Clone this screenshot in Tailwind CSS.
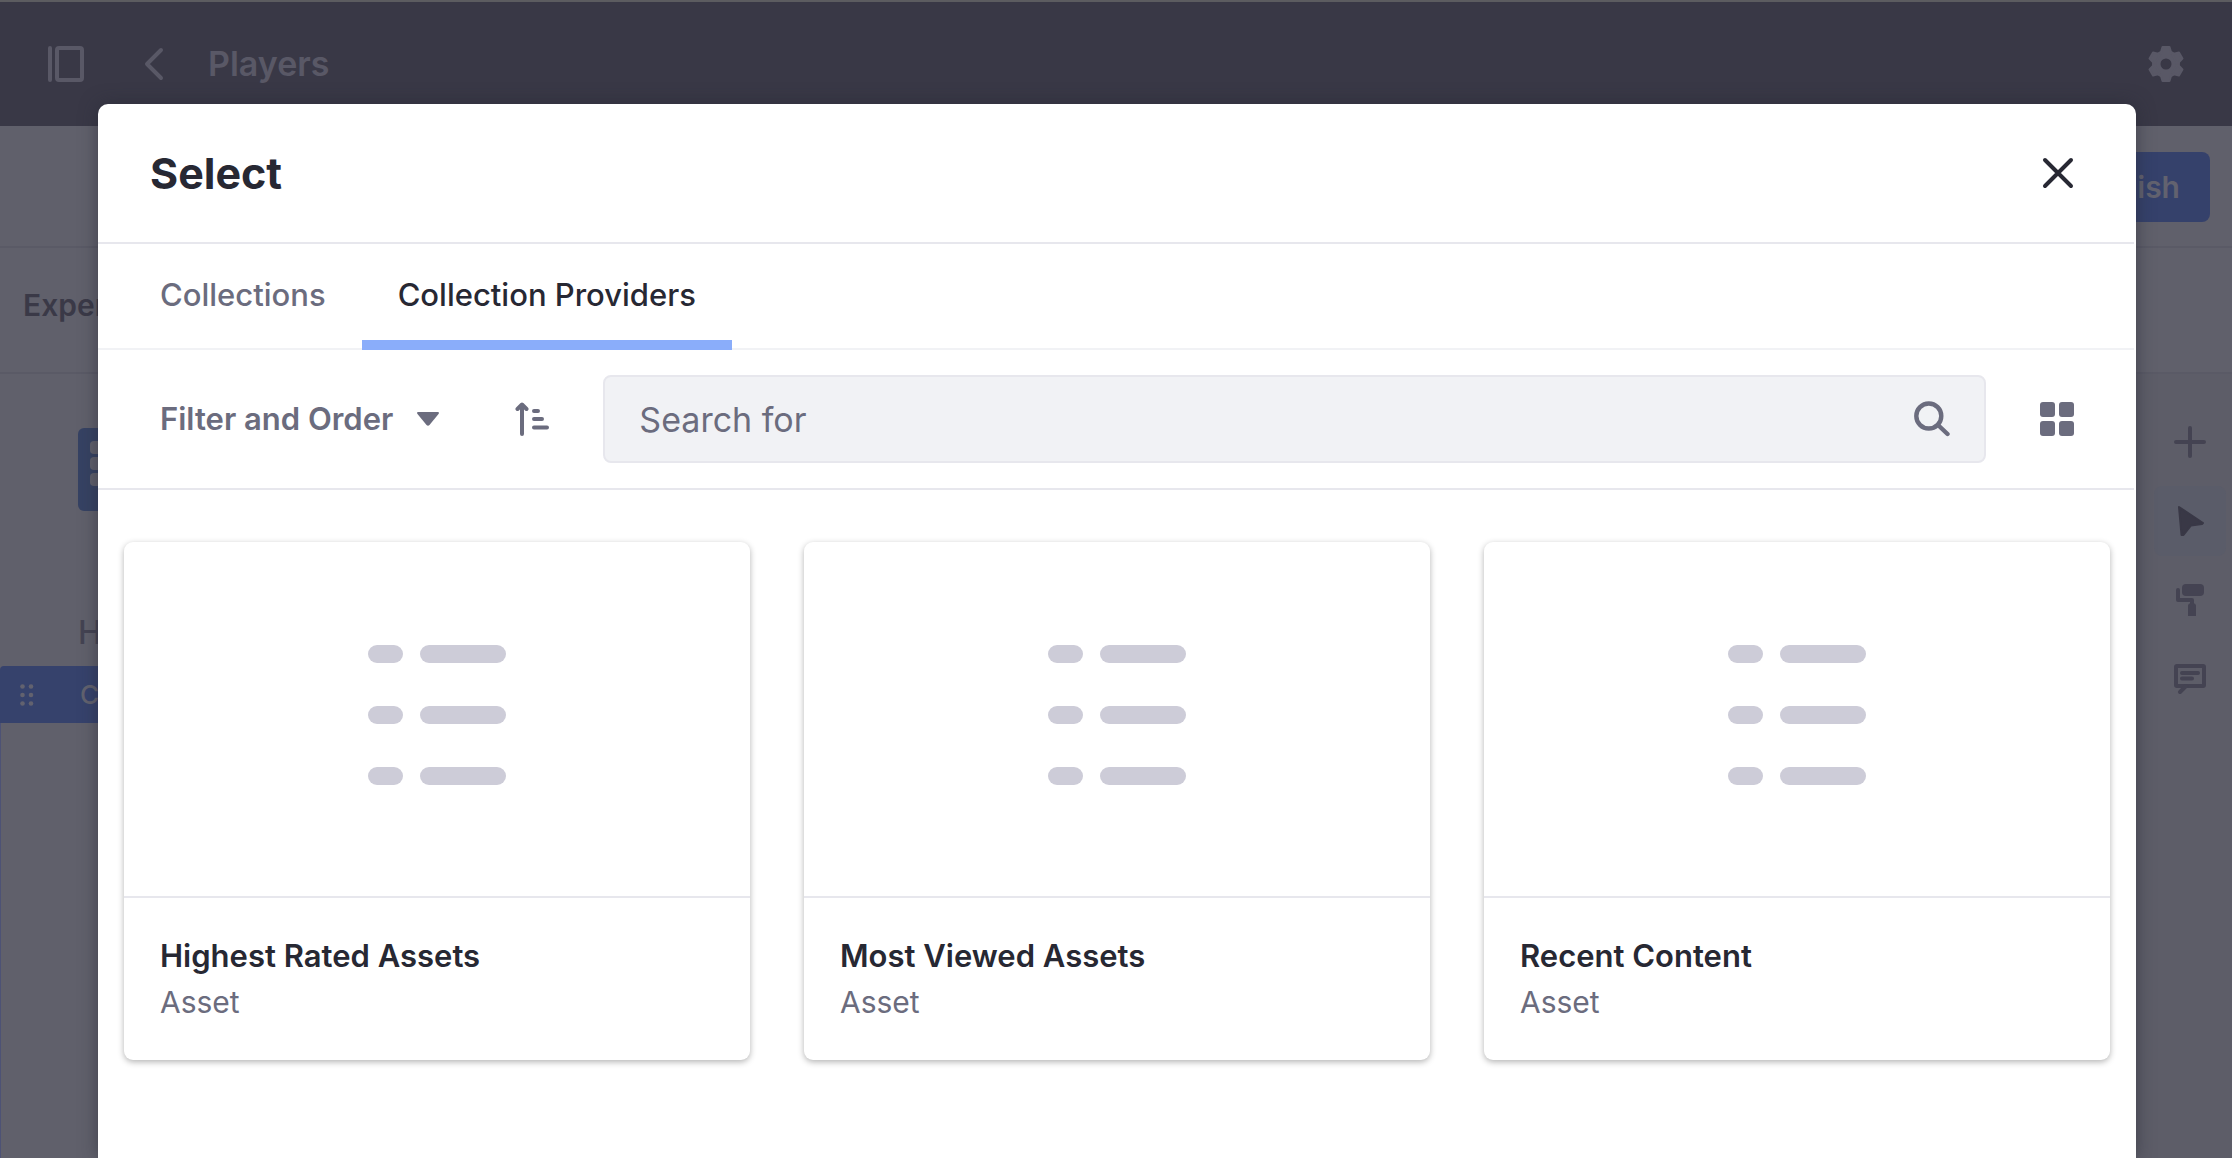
<!DOCTYPE html>
<html lang="en">
<head>
<meta charset="utf-8">
<meta name="viewport" content="width=device-width, initial-scale=1">
<title>Players – Select</title>
<script src="https://cdn.jsdelivr.net/npm/@tailwindcss/browser@4"></script>
</head>
<body class="relative h-screen overflow-hidden bg-[#60606b] font-['Inter',sans-serif]">

<!-- Page editor, dimmed behind the dialog -->
<div class="flex h-full flex-col" inert>
  <header class="flex h-[126px] shrink-0 items-center border-t-2 border-[#5c5c60] bg-[#393846] px-[48px] text-[#595866]">
    <button type="button" aria-label="Toggle menu">
      <svg class="size-9" viewBox="0 0 36 36" fill="none" stroke="currentColor" stroke-width="4"><path d="M2 2v32" stroke-linecap="round"/><rect x="9" y="2" width="25" height="32" rx="2"/></svg>
    </button>
    <a href="#" aria-label="Back" class="ml-[58px]">
      <svg class="size-9" viewBox="0 0 36 36" fill="none" stroke="currentColor" stroke-width="4" stroke-linecap="round" stroke-linejoin="round"><path d="M19 4 5 18l14 14"/></svg>
    </a>
    <h1 class="ml-[30px] text-[34px] leading-[40px] font-semibold">Players</h1>
    <button type="button" aria-label="Settings" class="ml-auto">
      <svg class="size-9" viewBox="0 0 36 36" fill="currentColor">
        <circle cx="18" cy="18" r="9.750" fill="none" stroke="currentColor" stroke-width="8.500"/>
        <g stroke="currentColor" stroke-width="2" stroke-linejoin="round">
          <path d="M14.500 1h7l1.500 5-1 2h-8l-1-2Z"/>
          <path d="M14.500 1h7l1.500 5-1 2h-8l-1-2Z" transform="rotate(60 18 18)"/>
          <path d="M14.500 1h7l1.500 5-1 2h-8l-1-2Z" transform="rotate(120 18 18)"/>
          <path d="M14.500 1h7l1.500 5-1 2h-8l-1-2Z" transform="rotate(180 18 18)"/>
          <path d="M14.500 1h7l1.500 5-1 2h-8l-1-2Z" transform="rotate(240 18 18)"/>
          <path d="M14.500 1h7l1.500 5-1 2h-8l-1-2Z" transform="rotate(300 18 18)"/>
        </g>
      </svg>
    </button>
  </header>
  <div class="flex h-[122px] shrink-0 items-center justify-end border-b-2 border-[#5a5a66] pt-[2px] pr-[22px]">
    <button type="button" class="h-[70px] rounded-lg bg-[#35416b] px-[30px] text-[30px] font-semibold text-[#62626f]">Publish</button>
  </div>
  <div class="flex h-[126px] shrink-0 items-center border-b-2 border-[#5a5a66] pb-[10px] pl-[23px] text-[30px] font-semibold text-[#3a3947]">
    <span class="w-[75px] overflow-hidden">Experience</span>
  </div>
  <div class="flex min-h-0 flex-1">
    <main class="flex flex-1 flex-col">
      <div class="pt-[54px] pl-[78px]">
        <div class="grid h-[83px] w-[84px] content-start gap-y-[3px] rounded-md bg-[#364263] pt-[13px] pl-[12px]">
          <div class="h-[13px] w-[60px] rounded-sm bg-[#60606c]"></div>
          <div class="h-[13px] w-[60px] rounded-sm bg-[#60606c]"></div>
          <div class="h-[13px] w-[60px] rounded-sm bg-[#60606c]"></div>
        </div>
        <p class="mt-[102px] text-[32px] leading-[40px] font-medium text-[#444352]">Header</p>
      </div>
      <div class="mt-[13px] flex h-[57px] items-center gap-[46px] rounded-tl bg-[#36426c] pl-[20px] text-[26px] font-medium text-[#62626f]">
        <svg class="h-[22px] w-[14px]" viewBox="0 0 14 22" fill="currentColor"><circle cx="2.500" cy="2.500" r="2.300"/><circle cx="11" cy="2.500" r="2.300"/><circle cx="2.500" cy="11" r="2.300"/><circle cx="11" cy="11" r="2.300"/><circle cx="2.500" cy="19.500" r="2.300"/><circle cx="11" cy="19.500" r="2.300"/></svg>
        <span>Collection Display</span>
      </div>
      <div class="flex-1 border-l border-[#4d5275]"></div>
    </main>
    <aside class="flex w-[100px] flex-col items-end gap-[9px] bg-[#5d5d68] pt-[33px] pr-[6px] text-[#444352]">
      <button type="button" aria-label="Add" class="grid h-[70px] w-[72px] place-items-center rounded-lg">
        <svg class="size-8" viewBox="0 0 32 32" fill="none" stroke="currentColor" stroke-width="4" stroke-linecap="round"><path d="M16 2v28M2 16h28"/></svg>
      </button>
      <button type="button" aria-label="Select" class="grid h-[70px] w-[72px] place-items-center rounded-lg bg-[#5a5c69] text-[#393846]">
        <svg class="size-8" viewBox="0 0 32 32" fill="currentColor" stroke="currentColor" stroke-width="2" stroke-linejoin="round"><path d="M5 2 29 18l-1 1-11 1.500L9.500 30l-2 0Z"/></svg>
      </button>
      <button type="button" aria-label="Styles" class="grid h-[70px] w-[72px] place-items-center rounded-lg">
        <svg class="size-8" viewBox="0 0 32 32" fill="currentColor"><rect x="8" y="0" width="22" height="12" rx="4"/><path d="M4 6v10h14v4" fill="none" stroke="currentColor" stroke-width="4" stroke-linecap="round" stroke-linejoin="round"/><path d="M14 32V22q0-3 4-3t4 3v10Z"/></svg>
      </button>
      <button type="button" aria-label="Comments" class="grid h-[70px] w-[72px] place-items-center rounded-lg">
        <svg class="size-8" viewBox="0 0 32 32" fill="none" stroke="currentColor" stroke-width="4" stroke-linecap="round" stroke-linejoin="round"><rect x="2" y="3" width="28" height="20" rx="1"/><path d="M8 10h16M8 15.500h10M12 23l-6 6"/></svg>
      </button>
    </aside>
  </div>
</div>

<!-- Item selector dialog -->
<div class="absolute inset-0 pt-[104px] pr-[96px] pl-[98px]">
  <section role="dialog" aria-modal="true" aria-labelledby="dialog-title" class="h-full rounded-t-[10px] bg-white pr-[2px] text-[#272833] shadow-[0_0_18px_rgba(39,40,51,0.55)]">
    <header class="flex h-[140px] items-center justify-between border-b-2 border-[#e7e7ed] pr-[60px] pl-[52px]">
      <h2 id="dialog-title" class="text-[43px] leading-[50px] font-bold">Select</h2>
      <button type="button" aria-label="Close">
        <svg class="size-8" viewBox="0 0 32 32" fill="none" stroke="currentColor" stroke-width="4" stroke-linecap="round"><path d="m3 3 26 26M29 3 3 29"/></svg>
      </button>
    </header>

    <nav class="flex h-[106px] border-b-2 border-[#f1f2f5] pl-[26px] text-[31px] font-medium">
      <a href="#" class="px-9 pt-[33px] leading-[36px] text-[#6b6c7e]">Collections</a>
      <a href="#" aria-current="page" class="-mb-[2px] border-b-[10px] border-[#8aadfa] px-9 pt-[33px] leading-[36px]">Collection Providers</a>
    </nav>

    <div class="flex h-[140px] items-center border-b-2 border-[#e7e7ed] pr-[60px] pl-[62px] text-[#6b6c7e]">
      <button type="button" class="flex items-center gap-[24px] text-[31px] font-semibold">
        Filter and Order
        <svg class="h-[14px] w-[22px]" viewBox="0 0 22 14" fill="currentColor"><path d="M1.500 0h19C22 0 22.300 1 21.500 2l-9 11q-1.500 1.500-3 0l-9-11C-.3 1 0 0 1.500 0Z"/></svg>
      </button>
      <button type="button" aria-label="Reverse order" class="ml-[76px]">
        <svg class="h-[34px] w-[34px]" viewBox="0 0 34 34" fill="none" stroke="currentColor" stroke-width="4" stroke-linecap="round" stroke-linejoin="round"><path d="M7 3v29M2.500 7 7 2.500 11.500 7M19 9h4M19 17h8M19 25.500h13"/></svg>
      </button>
      <form role="search" class="ml-[54px] flex h-[88px] flex-1 items-center rounded-lg border-2 border-[#e7e7ed] bg-[#f1f2f5] px-[34px]">
        <input type="search" aria-label="Search for" placeholder="Search for" class="min-w-0 flex-1 bg-transparent text-[34px] outline-none placeholder:text-[#6b6c7e]">
        <button type="submit" aria-label="Search">
          <svg class="size-9" viewBox="0 0 36 36" fill="none" stroke="currentColor" stroke-width="4.400" stroke-linecap="round"><circle cx="14.800" cy="15" r="12.500"/><path d="m24 24 9.500 9"/></svg>
        </button>
      </form>
      <button type="button" aria-label="Card view" class="ml-[54px]">
        <svg class="size-[34px]" viewBox="0 0 34 34" fill="currentColor"><rect width="15" height="15" rx="3"/><rect x="19" width="15" height="15" rx="3"/><rect y="19" width="15" height="15" rx="3"/><rect x="19" y="19" width="15" height="15" rx="3"/></svg>
      </button>
    </div>

    <ul class="grid grid-cols-3 gap-[54px] pt-[52px] pr-[24px] pl-[26px]">
      <li class="rounded-[9px] shadow-[0_2px_6px_rgba(0,0,0,0.3)]">
        <div class="flex h-[356px] items-center justify-center border-b-2 border-[#e7e7ed] pb-[8px]">
          <svg class="h-[140px] w-[138px]" viewBox="0 0 138 140" fill="#cdccd8"><rect y="0" width="35" height="18" rx="9"/><rect x="52" y="0" width="86" height="18" rx="9"/><rect y="61" width="35" height="18" rx="9"/><rect x="52" y="61" width="86" height="18" rx="9"/><rect y="122" width="35" height="18" rx="9"/><rect x="52" y="122" width="86" height="18" rx="9"/></svg>
        </div>
        <div class="h-[162px] px-9 pt-[35px]">
          <h3 class="text-[31px] leading-[46px] font-semibold">Highest Rated Assets</h3>
          <p class="text-[30px] leading-[46px] text-[#6b6c7e]">Asset</p>
        </div>
      </li>
      <li class="rounded-[9px] shadow-[0_2px_6px_rgba(0,0,0,0.3)]">
        <div class="flex h-[356px] items-center justify-center border-b-2 border-[#e7e7ed] pb-[8px]">
          <svg class="h-[140px] w-[138px]" viewBox="0 0 138 140" fill="#cdccd8"><rect y="0" width="35" height="18" rx="9"/><rect x="52" y="0" width="86" height="18" rx="9"/><rect y="61" width="35" height="18" rx="9"/><rect x="52" y="61" width="86" height="18" rx="9"/><rect y="122" width="35" height="18" rx="9"/><rect x="52" y="122" width="86" height="18" rx="9"/></svg>
        </div>
        <div class="h-[162px] px-9 pt-[35px]">
          <h3 class="text-[31px] leading-[46px] font-semibold">Most Viewed Assets</h3>
          <p class="text-[30px] leading-[46px] text-[#6b6c7e]">Asset</p>
        </div>
      </li>
      <li class="rounded-[9px] shadow-[0_2px_6px_rgba(0,0,0,0.3)]">
        <div class="flex h-[356px] items-center justify-center border-b-2 border-[#e7e7ed] pb-[8px]">
          <svg class="h-[140px] w-[138px]" viewBox="0 0 138 140" fill="#cdccd8"><rect y="0" width="35" height="18" rx="9"/><rect x="52" y="0" width="86" height="18" rx="9"/><rect y="61" width="35" height="18" rx="9"/><rect x="52" y="61" width="86" height="18" rx="9"/><rect y="122" width="35" height="18" rx="9"/><rect x="52" y="122" width="86" height="18" rx="9"/></svg>
        </div>
        <div class="h-[162px] px-9 pt-[35px]">
          <h3 class="text-[31px] leading-[46px] font-semibold">Recent Content</h3>
          <p class="text-[30px] leading-[46px] text-[#6b6c7e]">Asset</p>
        </div>
      </li>
    </ul>
  </section>
</div>
</body>
</html>
